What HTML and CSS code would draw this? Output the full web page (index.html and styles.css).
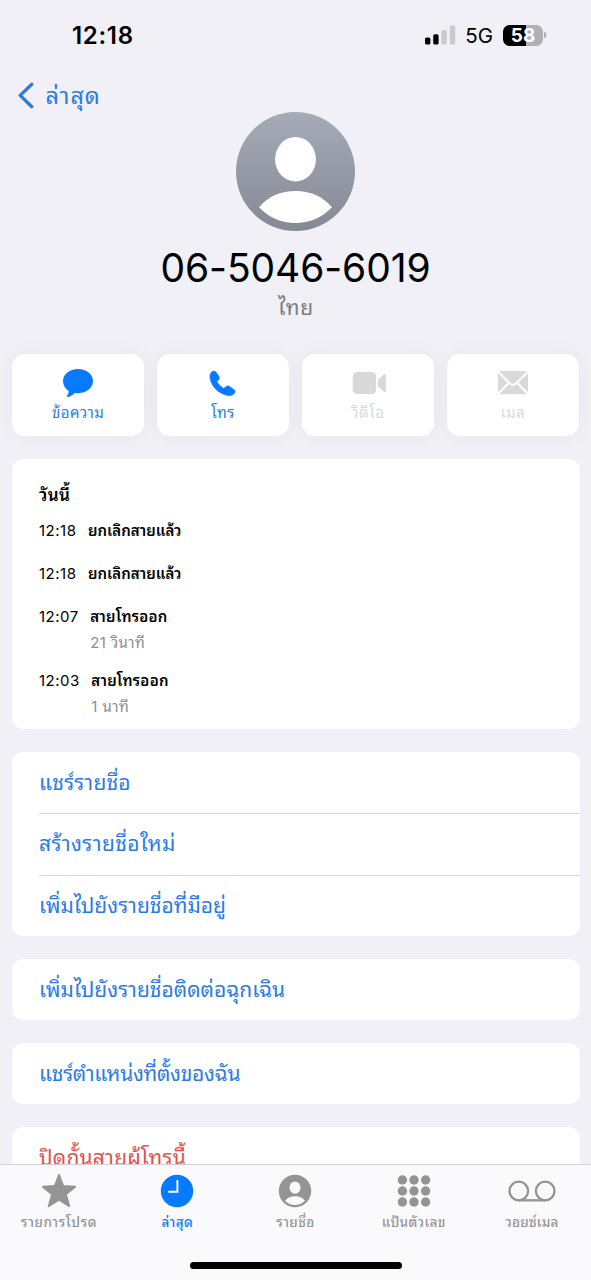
FILE: index.html
```html
<!DOCTYPE html>
<html lang="th">
<head>
<meta charset="utf-8">
<title>06-5046-6019</title>
<link rel="stylesheet" href="styles.css">
</head>
<body>
<div class="phone">
  <header class="status">
    <span class="clock">12:18</span>
    <div class="indicators">
      <svg class="signal" width="31" height="20" viewBox="0 0 31 20"><rect x="0" y="12.5" width="5.4" height="7" rx="1.6"/><rect x="8.2" y="9.3" width="5.4" height="10.2" rx="1.6"/><rect class="off" x="16.4" y="5" width="5.4" height="14.5" rx="1.6"/><rect class="off" x="24.8" y="0.6" width="5.4" height="18.9" rx="1.6"/></svg>
      <span class="network">5G</span>
      <div class="battery"><span>58</span></div>
      <svg class="battery-cap" width="3" height="8" viewBox="0 0 3 8"><path d="M0 .8C3.4 2 3.4 6 0 7.2Z"/></svg>
    </div>
  </header>

  <nav class="back">
    <svg width="17" height="27" viewBox="0 0 17 27"><path d="M14.8 2.300 3.200 13.400 14.800 24.700"/></svg>
    <span class="t-back">ล่าสุด</span>
  </nav>

  <section class="profile">
    <svg class="avatar" width="119" height="119" viewBox="0 0 119 119">
      <defs><linearGradient id="shade" x1="0" y1="0" x2="0" y2="1"><stop offset="0" stop-color="#a6abb9"/><stop offset="1" stop-color="#858994"/></linearGradient></defs>
      <circle cx="59.5" cy="59.5" r="59.5" fill="url(#shade)"/>
      <ellipse cx="59.5" cy="47.2" rx="20.4" ry="22.3" fill="#fff"/>
      <path d="M23 95.2C32 84.500 45 79 59.500 79S87 84.500 96 95.200C86.500 105.200 73.500 111 59.500 111S32.500 105.200 23 95.200Z" fill="#fff"/>
    </svg>
    <h1 class="number">06-5046-6019</h1>
    <p class="country">ไทย</p>
  </section>

  <section class="actions">
    <div class="action">
      <svg width="32" height="30" viewBox="0 0 32 30"><path d="M16 1C24.500 1 31 6.300 31 13.100S24.500 25.200 16.500 25.200C15 25.200 13.800 25.100 12.600 24.900C10.800 26.900 8.300 28.500 5.900 28.900C4.900 29 4.600 28.200 5.200 27.500C6.200 26.300 6.800 24.700 6.700 23.100C3.200 20.900 1 17.300 1 13.100C1 6.300 7.500 1 16 1Z"/></svg>
      <span class="t-a1">ข้อความ</span>
    </div>
    <div class="action">
      <svg width="32" height="30" viewBox="0 0 32 30"><path d="M3 7.200C3.300 4.800 5 3 7 3.100C8.200 3.200 8.900 3.900 9.700 5L12 8.300C12.800 9.600 12.600 10.700 11.700 11.800L10.600 13C10.100 13.600 10.200 14 10.600 14.600C11.800 16.600 14 18.800 16 20C16.700 20.400 17.100 20.300 17.600 19.800L19 18.600C20.100 17.600 21.200 17.600 22.500 18.400L26.600 21.300C28.500 22.600 28.600 24 27.200 25.600C25.600 27.400 23 28 20.500 27.500C16 26.600 11.300 24.200 7.800 20.200C4.600 16.500 2.600 11.300 3 7.200Z" stroke="currentColor" stroke-width=".5"/></svg>
      <span class="t-a2">โทร</span>
    </div>
    <div class="action disabled">
      <svg width="36" height="30" viewBox="0 0 36 30"><rect x="2.800" y="4" width="23.300" height="22" rx="4.500"/><path d="M28 11.700 33.500 6.500C34.700 5.500 36 5.800 36 7.200V22.800C36 24.200 34.700 24.500 33.500 23.500L28 18.300Z"/></svg>
      <span class="t-a3">วิดีโอ</span>
    </div>
    <div class="action disabled">
      <svg width="32" height="30" viewBox="0 0 32 30"><rect x="1" y="3" width="30" height="23.200" rx="2"/><path class="seam" d="M1 3.500 13.200 15.800Q16 18 18.800 15.800L31 3.500M1 26 12 14.500M31 26 20 14.500"/></svg>
      <span class="t-a4">เมล</span>
    </div>
  </section>

  <section class="card log">
    <h2 class="t-today">วันนี้</h2>
    <div class="call"><time>12:18</time><div><b class="t-cancel">ยกเลิกสายแล้ว</b></div></div>
    <div class="call"><time>12:18</time><div><b class="t-cancel">ยกเลิกสายแล้ว</b></div></div>
    <div class="call long"><time>12:07</time><div><b class="t-out">สายโทรออก</b><small class="t-sec">21 วินาที</small></div></div>
    <div class="call long"><time>12:03</time><div><b class="t-out">สายโทรออก</b><small class="t-min">1 นาที</small></div></div>
  </section>

  <section class="card menu">
    <div class="row"><span class="t-m1">แชร์รายชื่อ</span></div>
    <div class="row"><span class="t-m2">สร้างรายชื่อใหม่</span></div>
    <div class="row"><span class="t-m3">เพิ่มไปยังรายชื่อที่มีอยู่</span></div>
  </section>
  <section class="card menu"><div class="row"><span class="t-m4">เพิ่มไปยังรายชื่อติดต่อฉุกเฉิน</span></div></section>
  <section class="card menu"><div class="row"><span class="t-m5">แชร์ตำแหน่งที่ตั้งของฉัน</span></div></section>
  <section class="card menu danger"><div class="row"><span class="t-m6">ปิดกั้นสายผู้โทรนี้</span></div></section>

  <footer class="dock">
    <div class="tabs">
      <div class="tab">
        <svg width="36" height="36" viewBox="0 0 36 36"><path d="M18 1.800 22.300 13 34.200 13.700 25 21.300 28.300 33.200 18 26.800 7.700 33.200 11 21.300 1.800 13.700 13.700 13Z" stroke="currentColor" stroke-width="1.800" stroke-linejoin="round"/></svg>
        <span class="t-t1">รายการโปรด</span>
      </div>
      <div class="tab active">
        <svg width="36" height="36" viewBox="0 0 36 36"><circle cx="18" cy="18" r="16.200"/><path d="M18.400 7V18.700H9.200" fill="none" stroke="#fff" stroke-width="1.900"/></svg>
        <span class="t-t2">ล่าสุด</span>
      </div>
      <div class="tab">
        <svg width="36" height="36" viewBox="0 0 36 36"><circle cx="18" cy="18" r="16.200"/><ellipse cx="18" cy="14.600" rx="5.500" ry="6.200" fill="#fafafc"/><path d="M8 27.700C10.300 24.800 14 23.300 18 23.300S25.700 24.800 28 27.700C25.300 30.500 21.800 32 18 32S10.700 30.500 8 27.700Z" fill="#fafafc"/></svg>
        <span class="t-t3">รายชื่อ</span>
      </div>
      <div class="tab">
        <svg width="36" height="36" viewBox="0 0 36 36"><circle cx="6.400" cy="7" r="4.700"/><circle cx="18" cy="7" r="4.700"/><circle cx="29.600" cy="7" r="4.700"/><circle cx="6.400" cy="18" r="4.700"/><circle cx="18" cy="18" r="4.700"/><circle cx="29.600" cy="18" r="4.700"/><circle cx="6.400" cy="29" r="4.700"/><circle cx="18" cy="29" r="4.700"/><circle cx="29.600" cy="29" r="4.700"/></svg>
        <span class="t-t4">แป้นตัวเลข</span>
      </div>
      <div class="tab">
        <svg width="50" height="36" viewBox="0 0 50 36"><g fill="none" stroke="currentColor" stroke-width="2.300"><circle cx="11.800" cy="18" r="9.300"/><circle cx="38.200" cy="18" r="9.300"/><path d="M11.800 27.300H38.200"/></g></svg>
        <span class="t-t5">วอยซ์เมล</span>
      </div>
    </div>
    <div class="home"></div>
  </footer>
</div>
</body>
</html>
```
FILE: styles.css
```css
* { box-sizing: border-box; }
body { margin: 0; background: #f1f0f6; }
h1, h2, p { margin: 0; font-weight: 400; }
svg { display: block; flex: none; fill: currentColor; }
.phone {
  width: 591px; height: 1280px; overflow: hidden; position: relative;
  background: #f1f0f6; color: #000; white-space: nowrap;
  font-family: Inter, "Noto Sans Thai Looped", "Noto Looped Thai", Loma, Waree, Garuda, Umpush, "Noto Sans Thai", "Noto Sans", sans-serif;
}
.status { height: 76px; display: flex; justify-content: space-between; padding: 21px 45px 0 72px; }
.clock { font-size: 24px; font-weight: 600; line-height: 30px; letter-spacing: .7px; }
.indicators { display: flex; align-items: center; height: 28px; margin-right: -1px; }
.off { fill: #c9c9ce; }
.network { font-size: 20.500px; line-height: 28px; margin: 1px 10px 0 9px; }
.battery {
  width: 40px; height: 21px; border-radius: 6.500px; color: #fff; text-align: center;
  font-size: 19px; font-weight: 700; line-height: 21px;
  background: linear-gradient(90deg, #000 57%, #b0b0b5 57%);
}
.battery-cap { margin-left: 1px; color: #b0b0b5; }
.back { height: 36px; display: flex; align-items: center; gap: 11.500px; padding: 3px 0 0 17px; color: #2c7be5; }
.back svg { fill: none; stroke: #2c7be5; stroke-width: 3.300; stroke-linecap: round; stroke-linejoin: round; }
.back span { font-size: 23.500px; line-height: 36px; letter-spacing: .9px; margin-top: 1px; }
.profile { display: flex; flex-direction: column; align-items: center; height: 242px; }
.number { font-size: 39px; line-height: 46px; margin-top: 14px; letter-spacing: -.1px; }
.country { font-size: 21px; line-height: 28px; margin-top: 3px; color: #7b7b80; letter-spacing: .8px; padding-left: 1px; }
.actions { display: grid; grid-template-columns: repeat(4, 1fr); gap: 12.500px; padding: 0 12px; height: 82px; }
.action {
  background: #fff; border-radius: 13px; box-shadow: 0 0 18px rgba(60, 60, 90, .05);
  display: flex; flex-direction: column; align-items: center; padding-top: 14px; color: #087aff;
}
.action span { font-size: 15px; line-height: 22px; margin-top: 4px; color: #2c7be5; letter-spacing: .5px; }
.action.disabled, .action.disabled span { color: #d9d9dc; }
.seam { fill: none; stroke: #fff; stroke-width: 2; }
.card { margin: 22.500px 11px 0 11.500px; background: #fff; border-radius: 11px; padding-left: 27.500px; }
.log { height: 270px; padding-top: 23px; margin-top: 23px; }
.log h2 { font-size: 17px; font-weight: 600; line-height: 27px; letter-spacing: .3px; }
.call { display: flex; gap: 11.500px; height: 43px; padding-top: 9px; }
.call.long { height: 63.500px; }
.call time { font-size: 15px; line-height: 26px; letter-spacing: .5px; }
.call div { display: flex; flex-direction: column; align-items: flex-start; }
.call b { font-size: 15px; font-weight: 600; line-height: 26px; letter-spacing: 0; }
.call .t-out { letter-spacing: .2px; }
.call small { font-size: 15px; line-height: 26px; color: #8e8e92; letter-spacing: .4px; }
.row { height: 61.500px; display: flex; align-items: center; font-size: 21px; line-height: 32px; color: #2c7be5; padding-top: 1px; }
.row + .row { border-top: 1px solid #d8d8dc; padding-top: 0; }
.t-m1 { letter-spacing: .2px; }
.t-m2 { letter-spacing: .4px; }
.t-m5 { letter-spacing: -.3px; }
.t-m6 { letter-spacing: .2px; }
.danger .row { color: #e5504a; }
.dock {
  position: absolute; left: 0; right: 0; bottom: 0; height: 116px;
  background: #fafafc; border-top: 1px solid #d0d0d4; display: flex; flex-direction: column; align-items: center;
}
.tabs { width: 100%; display: grid; grid-template-columns: repeat(5, 1fr); padding-top: 8px; }
.tab { display: flex; flex-direction: column; align-items: center; color: #949496; }
.tab span { font-size: 13.500px; font-weight: 500; line-height: 22px; margin-top: 2px; letter-spacing: .4px; }
.tab .t-t1 { letter-spacing: .6px; }
.tab .t-t5 { letter-spacing: .2px; }
.tab.active { color: #087aff; }
.home { width: 212px; height: 7px; border-radius: 4px; background: #000; margin-top: 29px; }
```
